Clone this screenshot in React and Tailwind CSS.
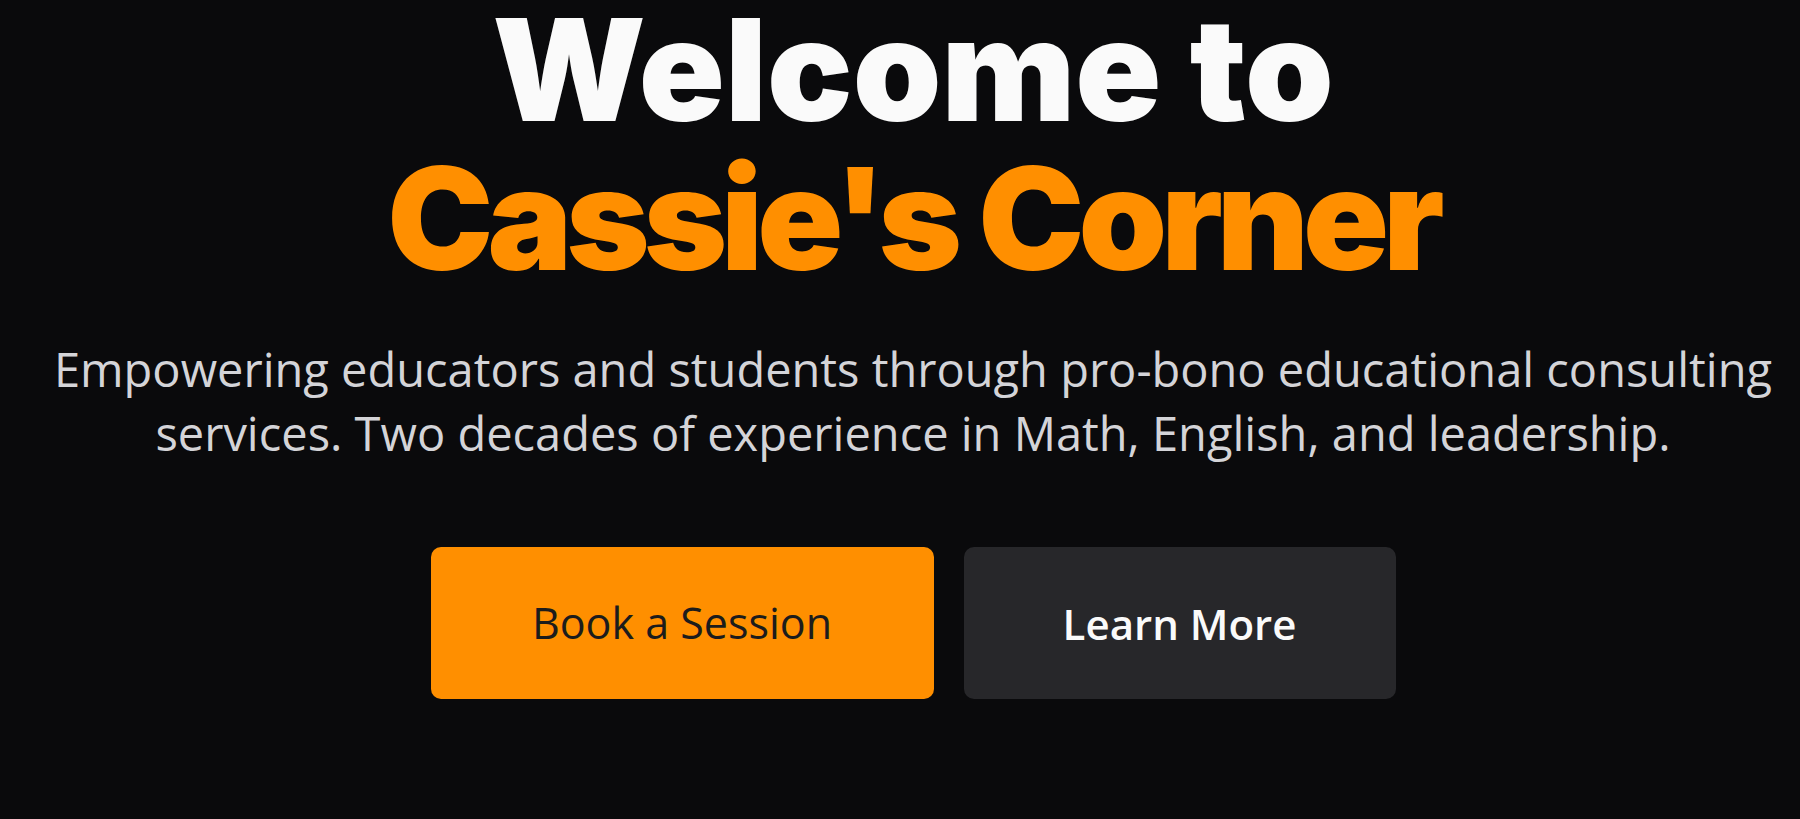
export default function App() {
  return (
    <div className="min-h-screen w-full bg-[#0a0a0c] overflow-hidden">
      <section className="flex flex-col items-center text-center pl-[26px] pt-[2px]">
        <h1
          className="text-[142px] leading-[149px] font-black text-[#fafafa] mt-[-7px]"
          style={{ fontFamily: "Inter, 'Noto Sans', sans-serif" }}
        >
          Welcome to
          <span className="block text-[#ff8f00] tracking-[-6px]">Cassie's Corner</span>
        </h1>
        <p
          className="mt-[44px] text-[47px] leading-[64px] text-[#d4d4d8]"
          style={{ fontFamily: "'Open Sans', 'Noto Sans', sans-serif" }}
        >
          Empowering educators and students through pro-bono educational consulting
          <br />
          services. Two decades of experience in Math, English, and leadership.
        </p>
        <div className="mt-[82px] flex gap-[30px]" style={{ fontFamily: "'Open Sans', 'Noto Sans', sans-serif" }}>
          <button className="w-[503px] h-[152px] rounded-[10px] bg-[#ff8f00] text-[#1c1c1c] text-[43px]">
            Book a Session
          </button>
          <button className="w-[432px] h-[152px] rounded-[10px] bg-[#27272a] text-[#fafafa] text-[42px] font-semibold">
            Learn More
          </button>
        </div>
      </section>
    </div>
  );
}
